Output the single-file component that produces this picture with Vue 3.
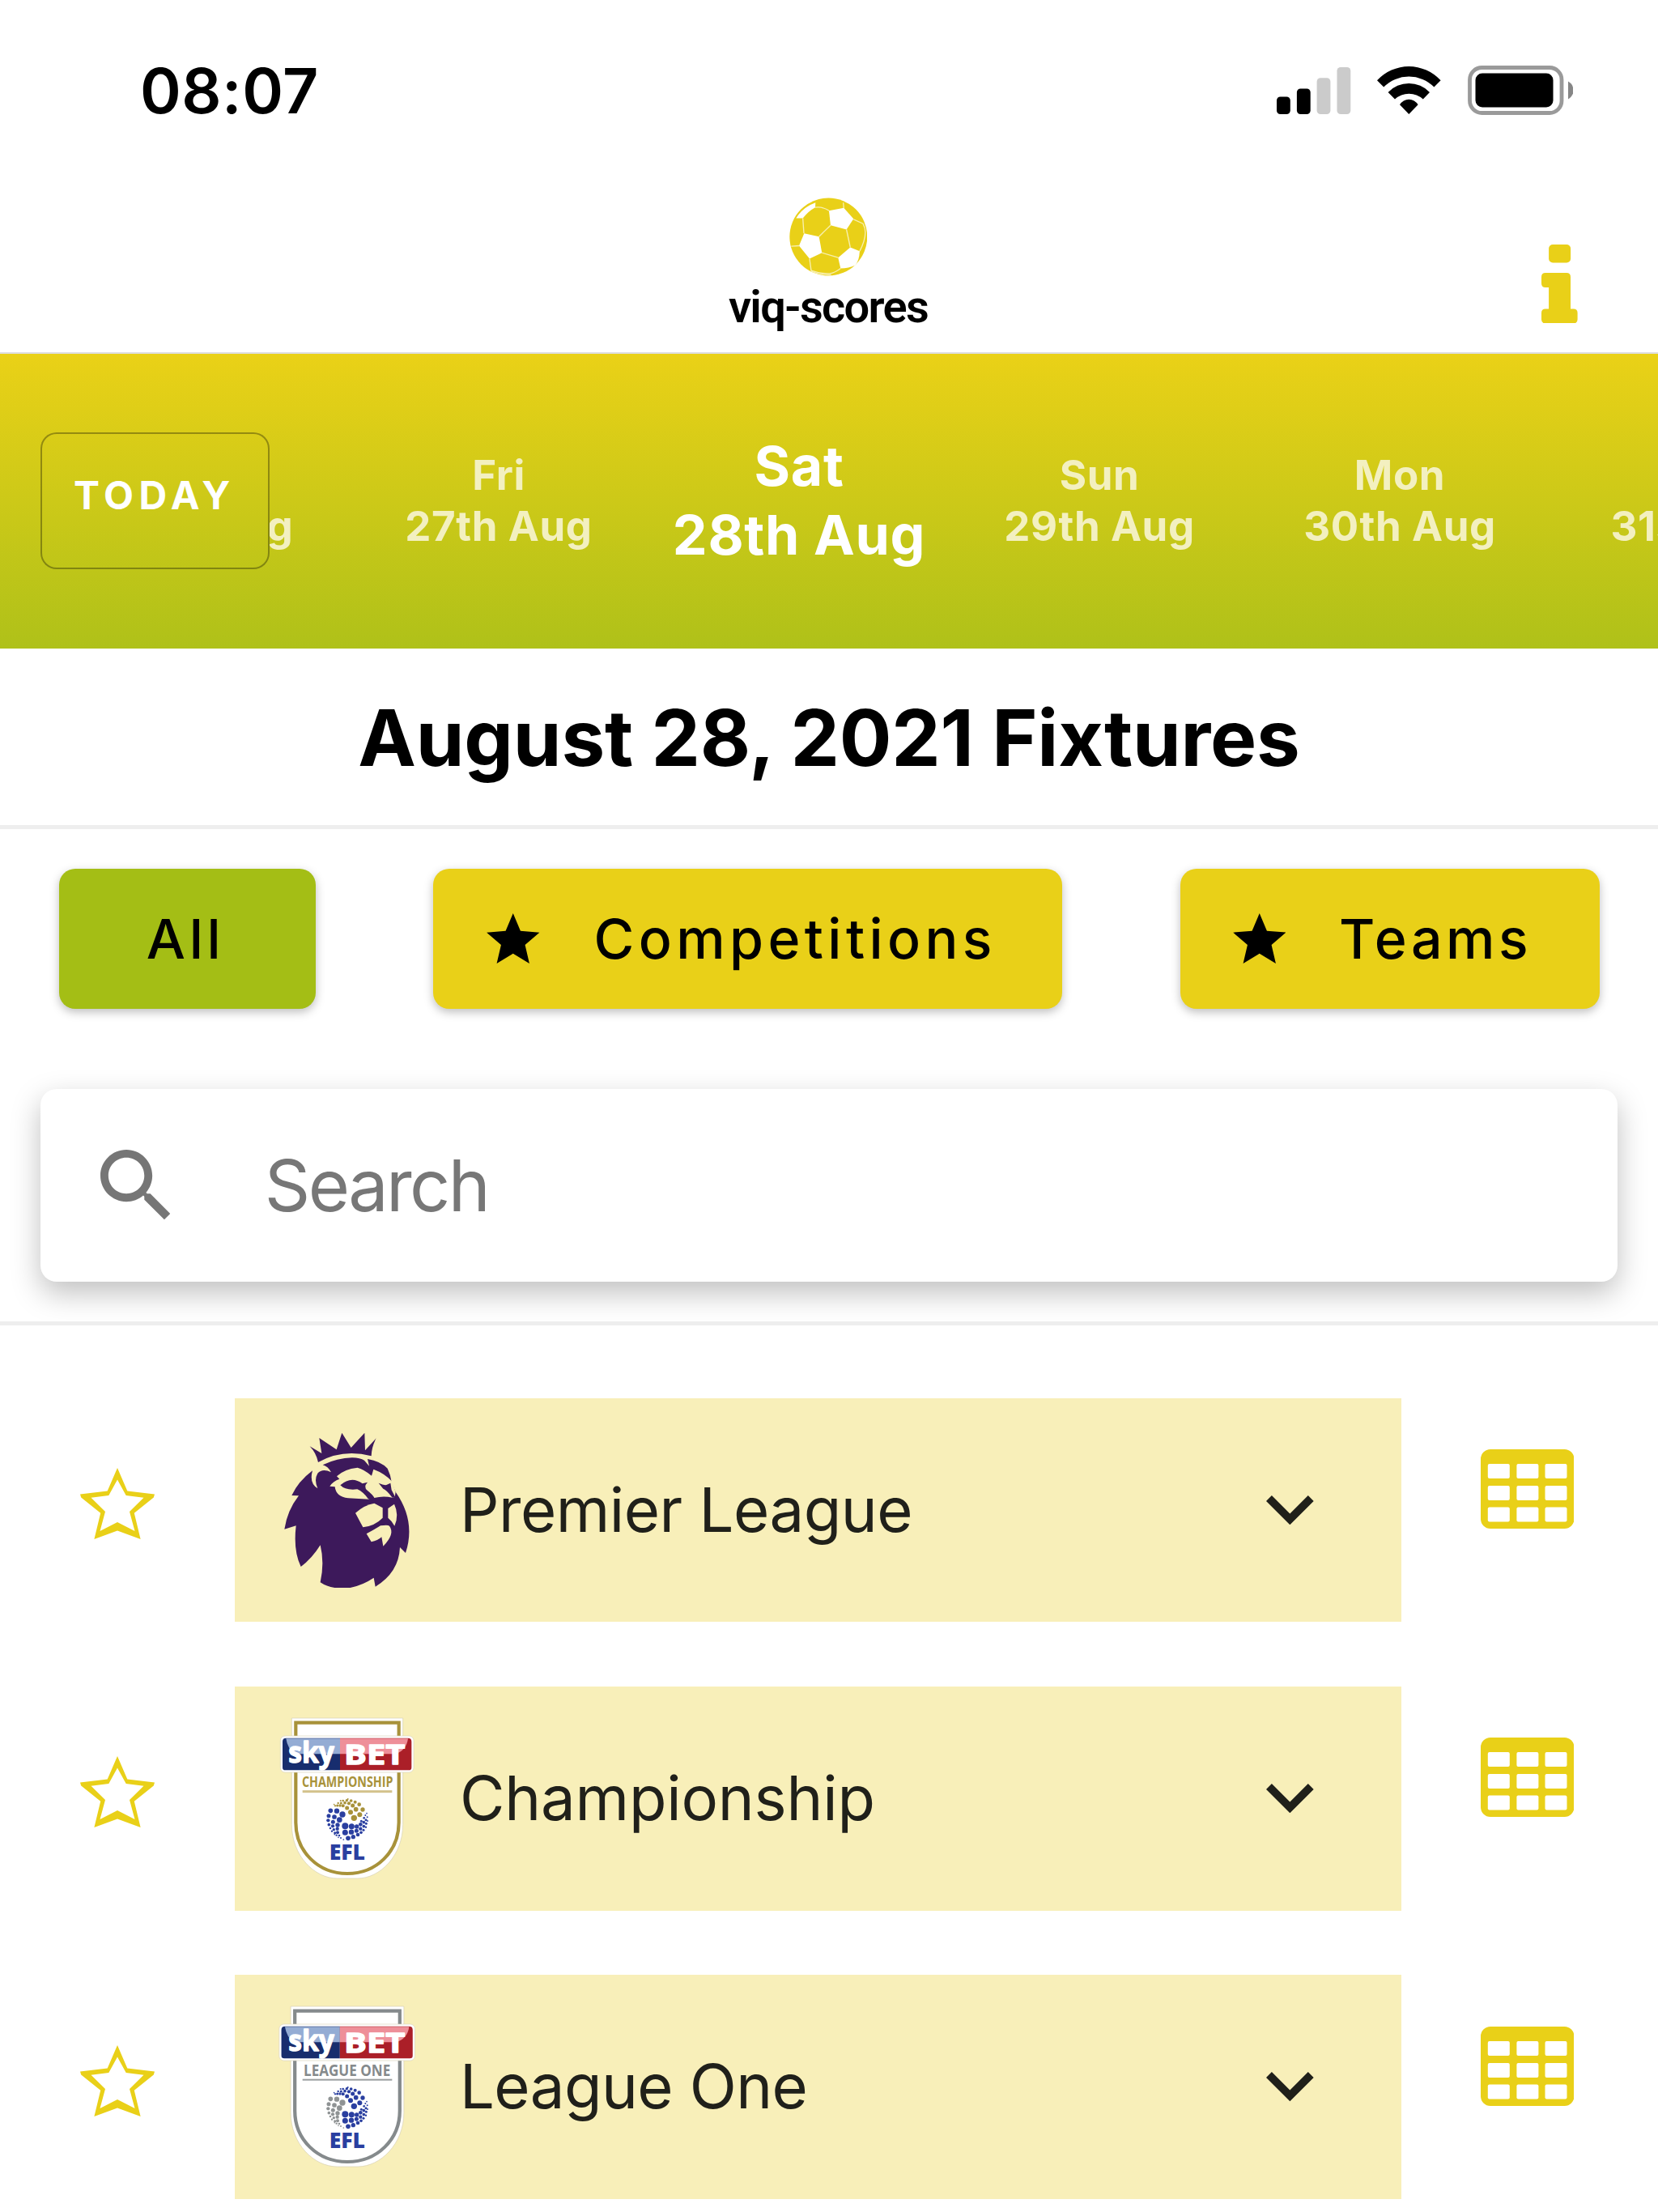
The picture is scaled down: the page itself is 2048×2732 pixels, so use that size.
<script setup>
const days = [
  { day: 'Thu', date: '26th Aug' },
  { day: 'Fri', date: '27th Aug' },
  { day: 'Sat', date: '28th Aug', active: true },
  { day: 'Sun', date: '29th Aug' },
  { day: 'Mon', date: '30th Aug' },
  { day: 'Tue', date: '31st Aug' }
]

const GOLD = '#a8923a'
const GREY = '#858a8c'
const BLUE = '#2a3fa0'

const leagues = [
  { name: 'Premier League', tracking: -0.5, crest: null },
  {
    name: 'Championship',
    tracking: -0.2,
    crest: {
      label: 'CHAMPIONSHIP', line: GOLD, text: GOLD, top: GOLD, left: BLUE, stretch: 1,
      labelX: 159, labelW: 337, labelSize: 52, labelY: 351, rule: 9, ruleColor: '#d3c28c'
    }
  },
  {
    name: 'League One',
    tracking: -0.6,
    crest: {
      label: 'LEAGUE ONE', line: GREY, text: GREY, top: BLUE, left: '#8f9394', stretch: 1.018,
      labelX: 165, labelW: 322, labelSize: 60, labelY: 353, rule: 6, ruleColor: '#9a9e9f'
    }
  }
]

// Dots of the globe, as [x, y, radius]
const dotsTop = [
  [352, 466, 11], [339, 445, 9], [373, 454, 9], [384, 435, 8], [359, 434, 8.5], [326, 429, 7.5], [371, 416, 7],
  [347, 420, 7.5], [356, 407, 6], [333, 412, 6.5], [341, 402, 5.5], [311, 421, 6], [318, 410, 5.5], [325, 401, 5],
  [300, 420, 5], [304, 411, 4.5], [311, 402, 4], [290, 420, 4.5], [293, 411, 3.5], [282, 421, 3.5], [278, 416, 2.5],
  [329, 396, 3], [302, 402, 3]
]
const dotsLeft = [
  [309, 453, 11], [288, 440, 9.5], [265, 439, 8.5], [298, 473, 10], [279, 462, 8.5], [258, 458, 7.5], [291, 492, 8],
  [274, 481, 7.5], [256, 475, 6.5], [290, 506, 6.5], [273, 496, 6.5], [259, 491, 5.5], [291, 520, 6], [277, 509, 5],
  [264, 504, 4], [281, 521, 4.5], [270, 515, 3.5], [297, 531, 4], [287, 530, 3.5], [303, 540, 3], [313, 546, 2.5],
  [280, 527, 2.5], [294, 538, 2.5]
]
const dotsRight = [
  [319, 496, 12], [343, 497, 10.5], [319, 520, 10.5], [342, 518, 9.5], [330, 541, 8.5], [349, 536, 8], [362, 498, 8],
  [361, 514, 7.5], [366, 528, 7], [376, 490, 7], [376, 506, 6.5], [378, 520, 5.5], [388, 482, 5.5], [388, 497, 5.5],
  [387, 511, 4.5], [396, 473, 4.5], [397, 487, 4.5], [396, 500, 3.5], [401, 463, 3], [389, 466, 4], [402, 477, 3],
  [399, 449, 2.5], [379, 478, 4.5], [394, 456, 3]
]
const cellX = [8.8, 44.4, 79.5]
const cellY = [18, 45, 71.4]
</script>

<template>
  <div class="page">
    <div class="status">
      <span class="time">08:07</span>
      <div class="status-icons">
        <svg width="91.5" height="59" viewBox="0 0 91.5 59">
          <rect x="0" y="37.5" width="16.8" height="21.5" rx="4.5" />
          <rect x="24.9" y="27.5" width="16.8" height="31.5" rx="4.5" />
          <rect x="49.6" y="14.3" width="16.8" height="44.7" rx="4.5" fill="#cbcbcb" />
          <rect x="74.5" y="1" width="16.8" height="58" rx="4.5" fill="#cbcbcb" />
        </svg>
        <svg width="78.6" height="59" viewBox="0 0 78.6 59">
          <path d="M0 17.3A53.3 53.3 0 0 1 78.6 17.3L70.4 25.5A43.7 43.7 0 0 0 8.2 25.5Z" />
          <path d="M13.6 32A35.5 35.5 0 0 1 65 32L56.8 40.6A25.7 25.7 0 0 0 22 40.6Z" />
          <path d="M28 47.3A13.6 15 0 0 1 50.6 47.3L39.3 59Z" />
        </svg>
        <svg width="130.5" height="61" viewBox="0 0 130.5 61">
          <rect x="2.5" y="2.5" width="113.5" height="56" rx="15" fill="none" stroke="#9a9a9a" stroke-width="4.8" />
          <rect x="9.5" y="9.5" width="96" height="42" rx="8.5" />
          <path d="M124 19.5Q130.5 23 130.5 30.5T124 41.5Z" fill="#868686" />
        </svg>
      </div>
    </div>

    <header class="header">
      <div class="brand">
        <svg class="ball" width="96.6" height="97" viewBox="345 71.5 290 291">
          <circle cx="490" cy="217" r="144" fill="#e9d018" />
          <g fill="#fff">
            <path d="M442 90L441 108Q415 122 395 148L370 148Q395 107 442 90Z" />
            <path d="M492 120L547 110L583 150L557 190L498 174Z" />
            <path d="M400 204L455 216L466 276L420 298L381 250Z" />
            <path d="M571 256L606 270Q604 305 590 322Q565 334 535 334L526 294Z" />
          </g>
          <g fill="none" stroke="#f8f0b0" stroke-width="4">
            <path d="M498 174L455 216M466 276L526 294M557 190L571 256M395 148L399 204M441 108Q466 104 492 120M420 298L426 342M352 252L382 250M545 90L547 110M583 152L618 168Q640 205 606 270" />
            <path d="M535 334Q515 350 495 353Q460 354 426 342" />
            <path d="M424 344Q455 358 500 358" />
          </g>
        </svg>
        <span class="brand-name">viq-scores</span>
      </div>
      <svg class="info" width="44.6" height="97.5" viewBox="0 0 44.6 97.5" fill="#e9d018">
        <rect x="9.1" y="0" width="27" height="22.5" rx="5" />
        <path d="M5 35H31Q36 35 36 40V79.5H39.6Q44.6 79.5 44.6 84.5V92.5Q44.6 97.5 39.6 97.5H5Q0 97.5 0 92.5V84.5Q0 79.5 5 79.5H9.1V53H5Q0 53 0 48V40Q0 35 5 35Z" />
      </svg>
    </header>

    <nav class="dates">
      <div v-for="d in days" :key="d.date" class="date" :class="{ active: d.active }">
        <span>{{ d.day }}</span>
        <span>{{ d.date }}</span>
      </div>
      <button class="today">TODAY</button>
    </nav>

    <h1 class="title">August 28, 2021 Fixtures</h1>

    <section class="filters">
      <div class="buttons">
        <button class="btn all">All</button>
        <button class="btn competitions">
          <svg width="65.5" height="62" viewBox="2 2 20 19"><path d="M12 17.27L18.18 21l-1.64-7.03L22 9.24l-7.19-.61L12 2 9.19 8.63 2 9.24l5.46 4.73L5.82 21z" /></svg>
          <span>Competitions</span>
        </button>
        <button class="btn teams">
          <svg width="65.5" height="62" viewBox="2 2 20 19"><path d="M12 17.27L18.18 21l-1.64-7.03L22 9.24l-7.19-.61L12 2 9.19 8.63 2 9.24l5.46 4.73L5.82 21z" /></svg>
          <span>Teams</span>
        </button>
      </div>
      <div class="search">
        <svg width="86.3" height="86.3" viewBox="3 3 17.49 17.49" fill="#767676">
          <path d="M15.5 14h-.79l-.28-.27C15.41 12.59 16 11.11 16 9.5 16 5.91 13.09 3 9.5 3S3 5.91 3 9.5 5.91 16 9.5 16c1.61 0 3.09-.59 4.23-1.57l.27.28v.79l5 4.99L20.49 19l-4.99-5zm-6 0C7.01 14 5 11.99 5 9.5S7.01 5 9.5 5 14 7.01 14 9.5 11.99 14 9.5 14z" />
        </svg>
        <span>Search</span>
      </div>
    </section>

    <main class="list">
      <div v-for="l in leagues" :key="l.name" class="row">
        <div class="fav">
          <svg width="92" height="88" viewBox="0 0 92 88" fill="#e9d018" fill-rule="evenodd">
            <path d="M46 0L58.3 28.6L92 32.4L90.8 36.4L66.8 55.8L74.6 88L46 77.6L17.4 88L25.2 55.8L1.2 36.4L0 32.4L33.700 28.600ZM46 14.500L35.300 34L13.500 36.800L31 54L24.500 78L46 67L67.500 78L61 54L78.500 36.800L56.700 34Z" />
          </svg>
        </div>

        <div class="card">
          <svg v-if="!l.crest" class="crest" viewBox="75 80 510 620">
            <g fill="#3d195b">
              <path d="M188 138L232 164L223 107L287 150L307 88L341 143L391 88L393 153L434 108Q417 140 416 174Q310 146 219 197Q212 163 188 138Z" />
              <path d="M198 228Q145 268 121 320L147 321Q105 375 94 445L137 432Q126 525 155 584Q195 555 227 504Q243 570 227 642Q250 658 280 662H338Q385 652 425 625L431 658Q518 605 522 512L543 533Q582 415 506 307L491 270Q488 245 476 220Q450 193 402 185L408 211L390 190Q375 181 345 180Q290 181 236 207Q255 212 267 234Q235 218 217 238Q203 262 217 294Q185 275 198 228Z" />
            </g>
            <g fill="#f8efb9">
              <path d="M262 286Q275 266 298 259L288 249Q315 222 365 217Q390 224 417 247L424 223Q465 238 493 268L506 307L503 326L494 328Q460 320 427 329L408 334L330 330Q285 325 281 288Z" />
              <path d="M357 385Q390 355 427 349L458 366V403Q430 432 385 438Z" />
              <path d="M478 368L501 352Q520 392 502 433Q493 415 478 403Z" />
              <path d="M398 462Q430 445 450 432Q478 428 483 433Q505 462 460 508L454 474Q440 488 416 492Z" />
            </g>
            <g fill="#3d195b">
              <path d="M301 282Q342 246 383 276L402 271Q386 288 401 301Q420 316 427 328L420 342L404 332Q385 306 364 297Q320 302 301 282Z" />
              <path d="M443 274Q462 283 472 281L487 274L491 300L505 327L494 328Q472 299 460 295Z" />
            </g>
          </svg>

          <svg v-else class="crest" viewBox="75 99 510 620">
            <g :transform="`translate(${327 * (1 - l.crest.stretch)} 0) scale(${l.crest.stretch} 1)`">
              <path d="M121 96H533V490C533 605 448 690 365 690H290C205 690 121 605 121 490Z" fill="#fff" stroke="#d6d0b4" stroke-width="2" />
              <path d="M136 113H518V483C518 590 435 672 327 672S136 590 136 483Z" fill="#fff" :stroke="l.crest.line" stroke-width="12.5" />
              <rect x="79" y="162" width="494" height="135" rx="17" fill="#fff" stroke="#d9d3bd" stroke-width="2" />
              <path d="M100 170H300V289H97Q87 289 87 279V183Q87 170 100 170Z" fill="#172d6e" />
              <path d="M300 170H552Q565 170 565 183V279Q565 289 555 289H300Z" fill="#ab1f28" />
              <path d="M100 172H300V229H134Q106 212 100 172Z" fill="#94acd4" />
              <path d="M300 172H552Q546 216 505 229H300Z" fill="#ee8f99" />
            </g>
            <g fill="#fff" stroke="#fff" stroke-width="4" stroke-linejoin="round" font-family="'Open Sans', sans-serif" font-weight="700">
              <text x="109" y="260" font-size="106" textLength="170" lengthAdjust="spacingAndGlyphs">sky</text>
              <text x="315" y="267" font-size="103" textLength="226" lengthAdjust="spacingAndGlyphs">BET</text>
            </g>
            <text :x="l.crest.labelX" :y="l.crest.labelY" :font-size="l.crest.labelSize" :textLength="l.crest.labelW" :fill="l.crest.text" lengthAdjust="spacingAndGlyphs" font-family="'Open Sans', sans-serif" font-weight="700">{{ l.crest.label }}</text>
            <rect x="161" :y="368 - l.crest.rule / 2" width="332" :height="l.crest.rule" :fill="l.crest.ruleColor" />
            <circle v-for="(p, i) in dotsTop" :key="'t' + i" :cx="p[0]" :cy="p[1]" :r="p[2]" :fill="l.crest.top" />
            <circle v-for="(p, i) in dotsLeft" :key="'l' + i" :cx="p[0]" :cy="p[1]" :r="p[2]" :fill="l.crest.left" />
            <circle v-for="(p, i) in dotsRight" :key="'r' + i" :cx="p[0]" :cy="p[1]" :r="p[2]" fill="#2a3fa0" />
            <text x="260" y="622" font-size="81" textLength="133" lengthAdjust="spacingAndGlyphs" fill="#2a3fa0" font-family="'Open Sans', sans-serif" font-weight="800">EFL</text>
          </svg>

          <span class="name" :style="{ letterSpacing: l.tracking + 'px' }">{{ l.name }}</span>
          <svg class="chevron" width="58.7" height="36.3" viewBox="6 8.59 12 7.41" fill="#20201a">
            <path d="M16.59 8.59L12 13.17 7.41 8.59 6 10l6 6 6-6z" />
          </svg>
        </div>

        <div class="table">
          <svg width="115.5" height="98" viewBox="0 0 115.5 98">
            <rect width="115.5" height="98" rx="12" fill="#e9d018" />
            <template v-for="y in cellY" :key="y">
              <rect v-for="x in cellX" :key="x" :x="x" :y="y" width="27" height="18" rx="2" fill="#fff" />
            </template>
          </svg>
        </div>
      </div>
    </main>
  </div>
</template>

<style>
body {
  background: #fff;
}
</style>

<style scoped>
.page {
  width: 2048px;
  height: 2732px;
  overflow: hidden;
  background: #fff;
  color: #000;
  font-family: Inter, "Liberation Sans", sans-serif;
}
svg {
  display: block;
  flex: none;
}
button {
  font-family: inherit;
  padding: 0;
  border: 0;
}
.status {
  display: flex;
  align-items: center;
  justify-content: space-between;
  height: 224px;
  padding: 0 105px 0 173px;
  box-sizing: border-box;
}
.time {
  font-size: 77px;
  font-weight: 600;
  letter-spacing: 0.5px;
}
.status-icons {
  display: flex;
  align-items: center;
  gap: 32.5px;
  padding-bottom: 2px;
}
.header {
  display: grid;
  grid-template-columns: 1fr auto 1fr;
  height: 213px;
  box-sizing: border-box;
  border-bottom: 2px solid #dedede;
}
.brand {
  grid-column: 2;
  display: flex;
  flex-direction: column;
  align-items: center;
  padding: 20px 2px 0 0;
}
.brand-name {
  margin-top: 8px;
  font: 600 56px/60px Roboto, sans-serif;
  letter-spacing: -1.7px;
  white-space: nowrap;
}
.info {
  justify-self: end;
  margin: 77.5px 99px 0 0;
}
.dates {
  position: relative;
  display: flex;
  align-items: center;
  height: 364px;
  padding: 0 0 3px 59.5px;
  box-sizing: border-box;
  overflow: hidden;
  background: linear-gradient(#ead117, #afc119);
}
.date {
  flex: none;
  width: 371px;
  display: flex;
  flex-direction: column;
  align-items: center;
  font-size: 51px;
  line-height: 63px;
  font-weight: 650;
  letter-spacing: 0.6px;
  color: #f3f0c0;
}
.date.active {
  font-size: 68px;
  line-height: 84.5px;
  font-weight: 700;
  letter-spacing: 0.7px;
  color: #fff;
}
.today {
  position: absolute;
  left: 49.5px;
  top: 97px;
  width: 283px;
  height: 169px;
  box-sizing: border-box;
  padding-bottom: 15px;
  border: 2px solid rgba(0, 0, 0, 0.32);
  border-radius: 20px;
  background: linear-gradient(#ead117, #afc119) 0 -97px / 100% 364px border-box;
  background-origin: border-box;
  font-size: 48px;
  font-weight: 650;
  letter-spacing: 6.5px;
  color: #fff;
}
.title {
  margin: 0;
  height: 223px;
  box-sizing: border-box;
  padding-top: 2px;
  border-bottom: 5px solid #eee;
  font-size: 96px;
  line-height: 216px;
  font-weight: 700;
  letter-spacing: -0.2px;
  text-align: center;
}
.filters {
  height: 613px;
  box-sizing: border-box;
  padding: 49px 50px 0;
  border-bottom: 5px solid #eee;
  overflow: hidden;
}
.buttons {
  display: flex;
  justify-content: space-between;
  padding: 0 22.5px;
}
.btn {
  display: flex;
  align-items: center;
  gap: 66px;
  height: 173px;
  padding: 0 0 2px 65px;
  box-sizing: border-box;
  border-radius: 20px;
  background: #e9d018;
  box-shadow: 0 4px 12px rgba(0, 0, 0, 0.26);
  color: #000;
  font-size: 68px;
  font-weight: 500;
  letter-spacing: 4.6px;
}
.btn.all {
  width: 317px;
  padding: 0 4px 2px 0;
  justify-content: center;
  background: #a4be15;
}
.btn.competitions {
  width: 777px;
  padding-left: 66px;
  gap: 67px;
  letter-spacing: 5.4px;
}
.btn.teams {
  width: 518px;
}
.search {
  display: flex;
  align-items: center;
  gap: 117px;
  height: 238px;
  margin-top: 98.5px;
  padding-left: 73.5px;
  border-radius: 20px;
  background: #fff;
  box-shadow: 0 14px 36px rgba(0, 0, 0, 0.25);
  font-size: 88px;
  letter-spacing: -2.6px;
  color: #777;
}
.list {
  display: flex;
  flex-direction: column;
  gap: 79.5px;
  padding-top: 89.5px;
}
.row {
  display: flex;
  height: 276.8px;
}
.fav {
  width: 290px;
  display: flex;
  justify-content: center;
  padding-top: 86.5px;
  box-sizing: border-box;
}
.card {
  width: 1441px;
  display: flex;
  align-items: center;
  padding: 0 108.5px 0 55px;
  box-sizing: border-box;
  background: #f8efb9;
}
.crest {
  width: 170px;
  height: 206.7px;
  margin: 10px 53px 0 0;
  overflow: visible;
}
.name {
  flex: 1;
  margin-top: -2px;
  font-size: 76px;
  color: #20201a;
  white-space: nowrap;
}
.table {
  padding: 63.5px 0 0 97.5px;
}
</style>
